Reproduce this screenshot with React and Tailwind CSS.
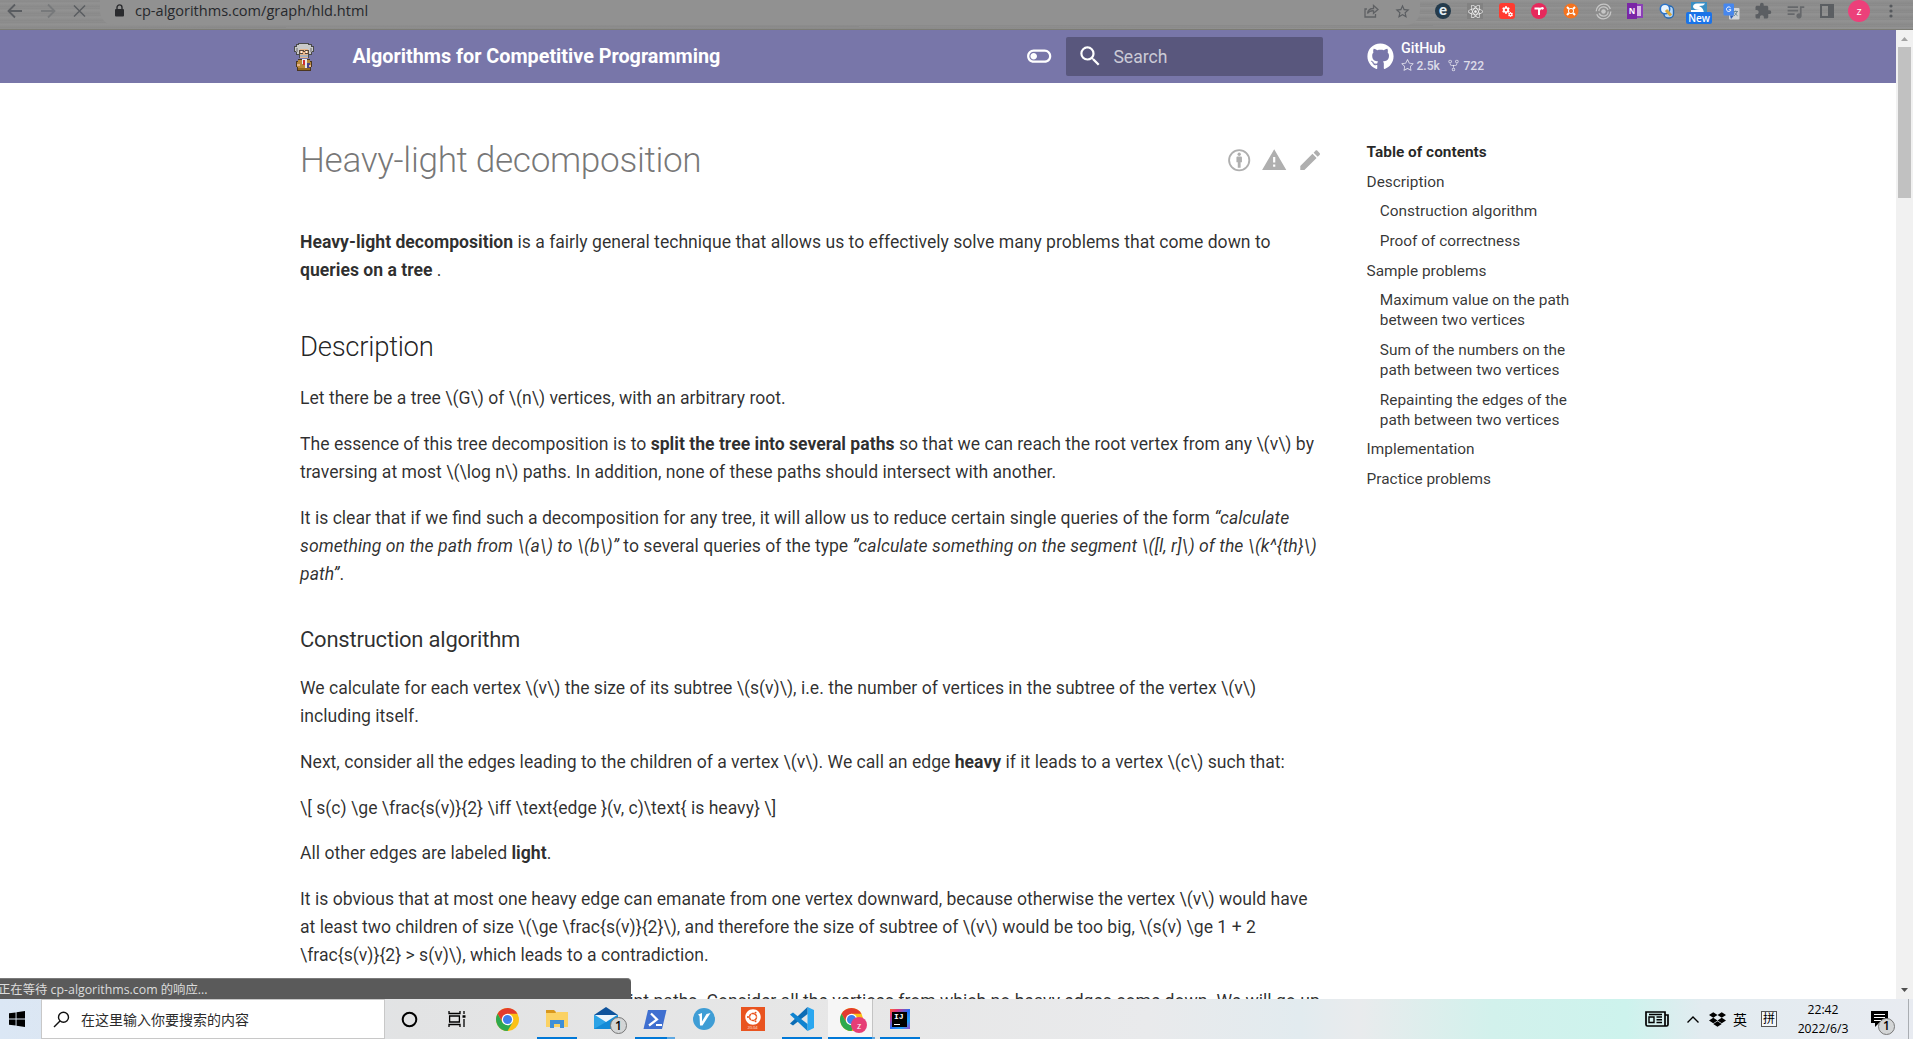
import React from "react";
import { FaGithub, FaReact, FaUbuntu, FaDropbox, FaCog } from "react-icons/fa";
import { GoStar, GoRepoForked } from "react-icons/go";
import { MdExtension, MdQueueMusic, MdStarBorder } from "react-icons/md";

const P = "mb-[17.6px] whitespace-nowrap";

/* ---------- browser toolbar ---------- */
function ExtensionIcons() {
  const icons = [
    <div className="flex h-4 w-4 items-center justify-center rounded-full bg-[#243b4c] font-['Lato',sans-serif] text-[15px] leading-none font-black text-[#e4edf2]"><span className="-mt-[3px]">e</span></div>,
    <div className="flex h-4 w-4 items-center justify-center bg-[#828282]"><FaReact size={15} color="#f2f2f2" /></div>,
    <div className="relative h-4 w-4 rounded-[3px] bg-[#ff3b30]"><FaCog className="absolute top-[3px] left-[3px]" size={8} color="#fff" /><FaCog className="absolute top-[9px] left-[9px]" size={5} color="#fff" /></div>,
    <svg width="16" height="16" viewBox="0 0 16 16"><circle cx="8" cy="8" r="8" fill="#e6295c" /><path d="M3.5 5.5h5M8 5V12M8 8.500q0-3 2-3" stroke="#fff" strokeWidth="2" fill="none" /><circle cx="11.300" cy="5.300" r="1.400" fill="#fff" /></svg>,
    <svg width="16" height="16" viewBox="0 0 16 16"><circle cx="8" cy="8" r="7.500" fill="#f4731f" /><path d="M4 4l2 2M12 4L10 6M4 12l2-2M12 12L10 10" stroke="#fff" strokeWidth="2" /><circle cx="8" cy="8" r="2.600" fill="none" stroke="#fff" strokeWidth="1" /></svg>,
    <svg width="17" height="17" viewBox="0 0 17 17" fill="none" stroke="#c6c6c6"><circle cx="8.500" cy="8.500" r="7.300" strokeWidth="1.300" strokeDasharray="20 3" /><circle cx="8.500" cy="8.500" r="4.700" strokeWidth="1.300" strokeDasharray="12.500 2.300" /><circle cx="8.500" cy="8.500" r="2.300" fill="#c6c6c6" stroke="none" /></svg>,
    <div className="relative h-4 w-4"><div className="absolute top-[1px] right-0 h-[14px] w-[8px] border-2 border-[#8a3fb5] bg-[#d9b8e8]" /><div className="absolute top-0 left-0 flex h-4 w-[10px] items-center justify-center bg-[#7b26a6] font-['Open_Sans',sans-serif] text-[8px] font-bold text-white">N</div></div>,
    <svg width="16" height="16" viewBox="0 0 16 16"><rect x="5" y="3" width="9.500" height="12" rx="4" fill="#b9d8f8" stroke="#2567b0" strokeWidth="1.400" /><circle cx="6" cy="6" r="4.700" fill="#e8f4ff" stroke="#2d74c8" strokeWidth="1.600" /><path d="M7 7l5 5.500" stroke="#d9a83c" strokeWidth="3" /></svg>,
    <div className="relative h-[18px] w-[26px]"><svg className="absolute top-0 left-[5px]" width="16" height="12" viewBox="0 0 16 12"><rect width="16" height="12" fill="#3a8fc4" /><path d="M0 12V8H9Q3 8 2 5Q2 1.500 6 1.500H14Q13 4 8 4Q13 6 13 12Z" fill="#fff" /></svg><div className="absolute top-[10px] left-0 h-[12px] w-[26px] rounded-[2px] bg-[#1a73e8] text-center font-['Open_Sans',sans-serif] text-[10px] leading-[12px] font-semibold text-white">New</div></div>,
    <svg width="17" height="17" viewBox="0 0 17 17"><rect x="6" y="5" width="10.500" height="11.500" rx="1" fill="#d4d6d8" /><rect x="0.500" y="0.500" width="10.500" height="12" rx="1" fill="#4787ee" /><path d="M8 16l-1-3.500h4z" fill="#2f5fb8" /><path d="M7.600 4.800A2.300 2.300 0 1 0 8 6.800H5.800" fill="none" stroke="#fff" strokeWidth="1" /><path d="M10.500 8.500h4.500M12.700 7.500v1M14 8.800q-1 3-3 4M11.500 9.500q1 2 3 3.200" fill="none" stroke="#6c8a9c" strokeWidth="1" /></svg>,
    <MdExtension size={18} color="#5b5e62" />,
    <MdQueueMusic size={21} color="#66686b" />,
    <svg width="14" height="14" viewBox="0 0 14 14"><rect x="1" y="1" width="12" height="12" fill="none" stroke="#5b5e62" strokeWidth="2" /><rect x="8" y="1" width="5" height="12" fill="#5b5e62" /></svg>,
    <div className="flex h-[22px] w-[22px] items-center justify-center rounded-full bg-[#ec407a] font-['Open_Sans',sans-serif] text-[11px] text-white">z</div>,
    <svg width="4" height="14" viewBox="0 0 4 14" fill="#56595d"><circle cx="2" cy="2" r="1.600" /><circle cx="2" cy="7" r="1.600" /><circle cx="2" cy="12" r="1.600" /></svg>,
  ];
  return (
    <div className="ml-[7px] flex h-[22px] items-center">
      {icons.map((icon, i) => (
        <div key={i} className="flex w-8 justify-center">{icon}</div>
      ))}
    </div>
  );
}

function BrowserBar() {
  return (
    <div className="h-[30px] shrink-0 overflow-hidden border-b border-[#7c7c74] bg-[#8e8e8e] bg-[repeating-linear-gradient(179.900deg,#8e8e8e_0px,#8a8a8a_2px,#939393_3px,#8e8e8e_5px,#898989_7px)]">
      <div className="flex h-[25px] items-start">
        <svg className="mt-[3px] ml-[7px]" width="16" height="16" viewBox="0 0 16 16" fill="none" stroke="#5a5d61" strokeWidth="1.800"><path d="M15 8H2M8 1.500L1.500 8L8 14.500" /></svg>
        <svg className="mt-[3px] ml-[17px]" width="16" height="16" viewBox="0 0 16 16" fill="none" stroke="#77797b" strokeWidth="1.800"><path d="M1 8H14M8 1.500L14.500 8L8 14.500" /></svg>
        <svg className="mt-[4px] ml-[17px]" width="13" height="14" viewBox="0 0 13 14" fill="none" stroke="#5a5d61" strokeWidth="1.500"><path d="M1 1.500L12 12.500M12 1.500L1 12.500" /></svg>
        <div className="ml-[14px] flex h-[25px] w-[1320px] items-start rounded-b-[14px] bg-[#919191]">
          <svg className="mt-[4px] ml-[15px]" width="9" height="13" viewBox="0 0 9 13"><rect x="0" y="5" width="9" height="7.600" rx="1" fill="#2a2b2e" /><path d="M2 5V3.400a2.500 2.500 0 0 1 5 0V5" fill="none" stroke="#2a2b2e" strokeWidth="1.400" /></svg>
          <span className="ml-[11px] font-['Open_Sans','Noto_Sans',sans-serif] text-[14.550px] leading-[21px] text-[#26282c]">cp-algorithms.com/graph/hld.html</span>
          <svg className="mt-[4px] mr-[15px] ml-auto" width="15" height="14" viewBox="0 0 15 14" fill="none" stroke="#5f6164" strokeWidth="1.300"><path d="M3 5H1v8h10.500v-3M3.500 9.500Q4 4.500 9.500 4.500V1.500L14 5.500L9.500 9.300V6.800Q5.500 6.500 3.500 9.500Z" /></svg>
          <MdStarBorder className="mt-[3px] mr-[9px]" size={17} color="#5a5d61" />
        </div>
        <ExtensionIcons />
      </div>
    </div>
  );
}

/* ---------- site header ---------- */
function Professor() {
  return (
    <svg width="22" height="28" viewBox="0 0 22 28" shapeRendering="crispEdges">
      <path d="M5 0h11v1h3v2h2v6h-2v3h-3v3H6v-3H3V9H1V3h2V1h2z" fill="#4a4a4a" />
      <path d="M6 1h9v1h3v2h2v4h-2v3H4V8H2V4h2V2h2z" fill="#c9c9c9" />
      <path d="M3 5h2v4H3zM17 5h2v4h-2z" fill="#9a9a9a" />
      <path d="M7 6h8v9H7z" fill="#e8b58a" />
      <path d="M6 7h5v1H6zM12 7h4v1h-4zM6 10h4v1H6zM12 10h4v1h-4zM6 8h1v2H6zM10 8h2v1h-2zM15 8h1v2h-1z" fill="#5b4a3c" />
      <path d="M8 8h1v2H8zM13 8h1v2h-1z" fill="#fff1e0" />
      <path d="M7 12h8v2H7z" fill="#a9b3bf" />
      <path d="M5 16h12v2h2v6h-1v4H4v-4H3v-6h2z" fill="#4b3620" />
      <path d="M5 17h12v2h1v5h-1v3H5v-3H4v-5h1z" fill="#b8893b" />
      <path d="M9 16h5v5H9z" fill="#ececec" />
      <path d="M10 17h2v5h-2z" fill="#cf2f33" />
      <path d="M12 19h2v6h-2z" fill="#e6e8f2" />
      <path d="M14 20h3v5h-3z" fill="#4a4387" />
      <path d="M4 21h3v2H4zM16 22h2v2h-2z" fill="#e8b58a" />
      <path d="M5 25h12v2H5z" fill="#94691f" />
    </svg>
  );
}

function SiteHeader() {
  return (
    <header className="flex h-[53px] shrink-0 items-center bg-[#7876a9] pl-[293px] text-white">
      <Professor />
      <span className="ml-[37.500px] text-[19.800px] font-bold">Algorithms for Competitive Programming</span>
      <div className="flex-1" />
      <svg width="26.400" height="26.400" viewBox="0 0 24 24" fill="#fff"><path d="M17 6H7c-3.310 0-6 2.690-6 6s2.690 6 6 6h10c3.310 0 6-2.690 6-6s-2.690-6-6-6zm0 10H7c-2.210 0-4-1.790-4-4s1.790-4 4-4h10c2.210 0 4 1.790 4 4s-1.790 4-4 4zM7 9c-1.660 0-3 1.340-3 3s1.340 3 3 3 3-1.340 3-3-1.340-3-3-3z" /></svg>
      <div className="ml-[13.600px] flex h-[39px] w-[257px] items-center rounded-[2px] bg-[#59577d]">
        <svg className="ml-[11px]" width="26.400" height="26.400" viewBox="0 0 24 24" fill="#fff"><path d="M9.500 3A6.500 6.500 0 0 1 16 9.500c0 1.610-.590 3.090-1.560 4.230l.270.270h.790l5 5-1.500 1.500-5-5v-.790l-.270-.270A6.516 6.516 0 0 1 9.500 16 6.500 6.500 0 0 1 3 9.500 6.500 6.500 0 0 1 9.500 3m0 2C7 5 5 7 5 9.500S7 14 9.500 14 14 12 14 9.500 12 5 9.500 5Z" /></svg>
        <span className="mt-[2px] ml-[10px] text-[17.600px] text-white/70">Search</span>
      </div>
      <div className="ml-[43.500px] flex w-[529.500px] items-center">
        <FaGithub size={27} />
        <div className="ml-[7.500px] text-[14.300px]">
          <div className="leading-[18px] font-medium">GitHub</div>
          <div className="flex items-center text-[12.100px] leading-[18px] font-medium text-white/75">
            <GoStar size={13} /><span className="ml-[2.500px]">2.5k</span>
            <GoRepoForked className="ml-[7.500px]" size={13} /><span className="ml-[3px]">722</span>
          </div>
        </div>
      </div>
    </header>
  );
}

/* ---------- article ---------- */
function Article() {
  return (
    <article className="ml-[300px] w-[1023px] shrink-0 pt-[54.500px] text-[17.600px] leading-[28.160px] text-black/82">
      <div className="mb-[44.300px] flex items-center">
        <h1 className="flex-1 text-[35.200px] leading-[45.760px] font-light tracking-[-0.010em] text-black/54">Heavy-light decomposition</h1>
        <div className="flex gap-[8.800px] text-[#afafaf]">
          <svg width="26.400" height="26.400" viewBox="0 0 24 24" fill="currentColor"><circle cx="12" cy="12" r="9.200" fill="none" stroke="currentColor" strokeWidth="1.700" /><circle cx="12" cy="6.600" r="1.500" /><path d="M9.500 9.600q0-.9.900-.9h3.200q.9 0 .9.900v4.200h-1.200v5h-2.600v-5H9.500z" /></svg>
          <svg width="26.400" height="26.400" viewBox="0 0 24 24" fill="currentColor" fillRule="evenodd"><path d="M1 21h22L12 2 1 21ZM11 9h2v5h-2zM11 16h2v2h-2z" /></svg>
          <svg width="26.400" height="26.400" viewBox="0 0 24 24" fill="currentColor"><path d="M20.710 7.040c.390-.390.390-1.040 0-1.410l-2.340-2.340c-.370-.390-1.020-.390-1.410 0l-1.840 1.830 3.750 3.750M3 17.250V21h3.750L17.810 9.930l-3.750-3.750L3 17.250Z" /></svg>
        </div>
      </div>
      <p className={P}><b>Heavy-light decomposition</b> is a fairly general technique that allows us to effectively solve many problems that come down to<br /><b>queries on a tree</b> .</p>
      <h2 className="mt-[44px] mb-[17.600px] text-[27.500px] leading-[38.500px] font-light tracking-[-0.010em] text-black/87">Description</h2>
      <p className={P}>{"Let there be a tree \\(G\\) of \\(n\\) vertices, with an arbitrary root."}</p>
      <p className={P}>The essence of this tree decomposition is to <b>split the tree into several paths</b>{" so that we can reach the root vertex from any \\(v\\) by"}<br />{"traversing at most \\(\\log n\\) paths. In addition, none of these paths should intersect with another."}</p>
      <p className={P}>It is clear that if we find such a decomposition for any tree, it will allow us to reduce certain single queries of the form <em className="tracking-[0.070px]">“calculate<br />{"something on the path from \\(a\\) to \\(b\\)”"}</em> to several queries of the type <em className="tracking-[0.070px]">{"”calculate something on the segment \\([l, r]\\) of the \\(k^{th}\\)"}<br />path”</em>.</p>
      <h3 className="mt-[35.200px] mb-[17.600px] text-[22px] leading-[33px] tracking-[-0.010em]">Construction algorithm</h3>
      <p className={P}>{"We calculate for each vertex \\(v\\) the size of its subtree \\(s(v)\\), i.e. the number of vertices in the subtree of the vertex \\(v\\)"}<br />including itself.</p>
      <p className={P}>{"Next, consider all the edges leading to the children of a vertex \\(v\\). We call an edge "}<b>heavy</b>{" if it leads to a vertex \\(c\\) such that:"}</p>
      <p className={P}>{"\\[ s(c) \\ge \\frac{s(v)}{2} \\iff \\text{edge }(v, c)\\text{ is heavy} \\]"}</p>
      <p className={P}>All other edges are labeled <b>light</b>.</p>
      <p className={P}>{"It is obvious that at most one heavy edge can emanate from one vertex downward, because otherwise the vertex \\(v\\) would have"}<br />{"at least two children of size \\(\\ge \\frac{s(v)}{2}\\), and therefore the size of subtree of \\(v\\) would be too big, \\(s(v) \\ge 1 + 2"}<br />{"\\frac{s(v)}{2} > s(v)\\), which leads to a contradiction."}</p>
      <p className={P}>Now we will decompose the tree into disjoint paths. Consider all the vertices from which no heavy edges come down. We will go up</p>
    </article>
  );
}

const toc = [
  ["Description", false],
  ["Construction algorithm", true],
  ["Proof of correctness", true],
  ["Sample problems", false],
  ["Maximum value on the path\nbetween two vertices", true],
  ["Sum of the numbers on the\npath between two vertices", true],
  ["Repainting the edges of the\npath between two vertices", true],
  ["Implementation", false],
  ["Practice problems", false],
];

function TableOfContents() {
  return (
    <nav className="ml-[43.600px] pt-[59px] text-[15.400px] leading-[20.020px] text-black/80">
      <div className="font-bold text-black/85">Table of contents</div>
      {toc.map(([label, nested]) => (
        <div key={label} className={nested ? "mt-[9.625px] ml-[13.200px] whitespace-pre" : "mt-[9.625px] whitespace-pre"}>{label}</div>
      ))}
    </nav>
  );
}

function Scrollbar() {
  return (
    <div className="flex w-[17px] shrink-0 flex-col items-center bg-[#f1f1f1]">
      <svg width="17" height="17" viewBox="0 0 17 17"><path d="M5 11l3.500-4L12 11z" fill="#a3a3a3" /></svg>
      <div className="h-[151px] w-[13px] bg-[#c1c1c1]" />
      <div className="flex-1" />
      <svg width="17" height="17" viewBox="0 0 17 17"><path d="M5 6l3.500 4L12 6z" fill="#505050" /></svg>
    </div>
  );
}

/* ---------- taskbar ---------- */
function Chrome({ size = 23 }) {
  return (
    <svg width={size} height={size} viewBox="0 0 24 24">
      <circle cx="12" cy="12" r="12" fill="#fbc116" />
      <path d="M12 6h10.390A12 12 0 0 0 1.610 6L6.800 15z" fill="#e33b2e" />
      <path d="M1.610 6A12 12 0 0 0 12 24l5.200-9H6.800z" fill="#2da94f" />
      <circle cx="12" cy="12" r="6" fill="#fff" />
      <circle cx="12" cy="12" r="4.700" fill="#3f7fec" />
    </svg>
  );
}

const Badge = ({ className }) => (
  <span className={"absolute flex h-[17px] w-[17px] items-center justify-center rounded-full border border-[#777] bg-[#d3d5d6] font-['Open_Sans',sans-serif] text-[12px] leading-none font-semibold text-black " + className}>1</span>
);

function TaskButton({ children, active, tail, bar = "w-[40px]" }) {
  return (
    <div className="relative flex h-[40px] w-[49px] shrink-0 items-center justify-center">
      {children}
      {active && <div className={"absolute bottom-0 left-[5px] h-[2px] bg-[#0078d7] " + bar} />}
      {tail && <div className="absolute right-[4px] bottom-0 h-[2px] w-[8px] bg-[#5ea8e2]" />}
    </div>
  );
}

function Taskbar() {
  return (
    <div className="flex h-[40px] shrink-0 bg-[linear-gradient(90deg,#dbe7f5_0%,#e2e3e4_21%,#e7e7e7_45%,#e9eaec_60%,#e2ebef_68%,#e9ebed_71%,#d2f1ec_78%,#cdf3ed_85%,#e2ebf0_89%,#e8ebf1_100%)] font-['Open_Sans','Noto_Sans_CJK_SC',sans-serif] text-black">
      <div className="flex w-[41px] items-center pl-[9px]">
        <svg width="16" height="16" viewBox="0 0 16 16"><path d="M0 2.300L6.600 1.400V7.600H0zM7.500 1.200L16 0V7.600H7.500zM0 8.400H6.600V14.600L0 13.700zM7.500 8.400H16V16L7.500 14.800z" /></svg>
      </div>
      <div className="flex w-[344px] items-center border border-[#c8c8c8] bg-white">
        <svg className="ml-[11px]" width="17" height="17" viewBox="0 0 17 17" fill="none" stroke="#111" strokeWidth="1.400"><circle cx="10.500" cy="6.300" r="5" /><path d="M7 10L1 16" /></svg>
        <span className="ml-[11px] text-[14px] text-[#2b2b2b]">在这里输入你要搜索的内容</span>
      </div>
      <TaskButton><svg width="17" height="17" viewBox="0 0 17 17"><circle cx="8.500" cy="8.500" r="6.800" fill="none" stroke="#000" strokeWidth="2" /></svg></TaskButton>
      <TaskButton><svg className="-ml-[3px]" width="18" height="16" viewBox="0 0 18 16" fill="none" stroke="#000" strokeWidth="1.300"><path d="M1 0v2.500h11V0M1 16v-2.500h11V16M1.600 5h9.800v6H1.600zM16 0v3M16 8v8" /><path d="M14.500 5.500h3" strokeWidth="2.500" /></svg></TaskButton>
      <TaskButton><Chrome /></TaskButton>
      <TaskButton active>
        <svg width="22" height="20" viewBox="0 0 22 20"><path d="M0 1h8l2 2v4H0z" fill="#d9981e" /><path d="M0 4h9l2-1h11v15H0z" fill="#fbd264" /><path d="M4 19v-8h14v8h-4v-4H8v4z" fill="#3e8fd8" /></svg>
      </TaskButton>
      <TaskButton>
        <svg className="-mt-[3px]" width="24" height="22" viewBox="0 0 24 22"><path d="M0 8L12 0l12 8v3H0z" fill="#0f539c" /><path d="M0 8v14h24V8z" fill="#2ca3e6" /><path d="M0 22L24 8v14z" fill="#138bd7" /><path d="M1 8h22l-11 7z" fill="#eef5fb" /></svg>
        <Badge className="top-[18px] left-[29px]" />
      </TaskButton>
      <TaskButton active tail bar="w-[32px]">
        <svg width="24" height="19" viewBox="0 0 24 19"><path d="M5 0h18.500L19 19H.500z" fill="#3f6fd0" /><path d="M8 3.500l6 6-8 6M13 15h6" fill="none" stroke="#fff" strokeWidth="2.200" /></svg>
      </TaskButton>
      <TaskButton><svg width="22" height="22" viewBox="0 0 22 22"><circle cx="11" cy="11" r="11" fill="#3f9dd5" /><path d="M5 6.500L9 5v8.500L13.500 6l4-1L9.500 17.500H7L6.500 8z" fill="#fff" /></svg></TaskButton>
      <TaskButton>
        <div className="flex h-6 w-6 flex-col items-center bg-[#e95420] pt-[2px]"><FaUbuntu size={16} color="#fff" /><span className="mt-[1px] text-[4px] leading-[4px] text-white/80">20.04</span></div>
      </TaskButton>
      <TaskButton active>
        <svg width="24" height="24" viewBox="0 0 24 24"><path d="M17.500 0L24 3v18l-6.500 3z" fill="#2aa7f0" /><path d="M17.500 0v7L3 18.500 0 16.500z" fill="#0b6cb5" /><path d="M17.500 24v-7L3 5.500 0 7.500z" fill="#0f83d0" /></svg>
      </TaskButton>
      <div className="relative flex h-[40px] w-[49px] shrink-0 items-center justify-center">
        <div className="flex h-[40px] w-[45px] items-center justify-center border-r border-[#c4c4c4] bg-[#f6f6f6] pl-[3px]"><Chrome /></div>
        <span className="absolute top-[18px] left-[25px] flex h-4 w-4 items-center justify-center rounded-full bg-[#e63e76] text-[9px] leading-none text-white">z</span>
        <div className="absolute bottom-0 left-[2px] h-[2px] w-[45px] bg-[#0078d7]" />
        <div className="absolute right-0 bottom-0 h-[2px] w-[3px] bg-[#5ea8e2]" />
      </div>
      <TaskButton active>
        <div className="flex h-5 w-5 items-center justify-center bg-[linear-gradient(135deg,#fc6b2d_0%,#e0357c_20%,#2a6df5_50%,#1ea0f5_75%,#a04ad0_100%)]"><div className="relative h-[15px] w-[15px] bg-black pl-[2px] font-['Liberation_Mono',monospace] text-[8px] leading-[9px] font-bold text-white">IJ<div className="absolute bottom-[2px] left-[2px] h-px w-[6px] bg-white" /></div></div>
      </TaskButton>
      <div className="flex-1" />
      <div className="flex w-[263px] items-center">
        <svg width="24" height="16" viewBox="0 0 24 16" fill="none" stroke="#000" strokeWidth="1.700"><path d="M20 15H2.500Q1 15 1 13.500V1h19zM20 4h3v9.500Q23 15 21.500 15H19" /><path d="M4 6h5v5.500H4zM4 3.500h13M11.500 6H17M11.500 8.800H17M11.500 11.500H17" strokeWidth="1.400" /></svg>
        <svg className="ml-[18px]" width="12" height="7" viewBox="0 0 12 7" fill="none" stroke="#000" strokeWidth="1.400"><path d="M.5 6.500L6 1l5.500 5.500" /></svg>
        <FaDropbox className="ml-[10px]" size={17} />
        <span className="ml-[7px] text-[14px]">英</span>
        <span className="ml-[14px] flex h-4 w-4 items-center justify-center border border-[#555] bg-white/60 text-[12px] leading-none">拼</span>
        <div className="ml-[18.500px] w-[55px] text-center text-[12.200px] leading-[19px]">22:42<br />2022/6/3</div>
        <div className="relative ml-[20.500px] h-[17px] w-[18px]">
          <svg width="17" height="16" viewBox="0 0 17 16"><path d="M0 0h17v12h-9l-4 4v-4H0z" /><path d="M3 3.500h11M3 6.500h11M3 9.500h7" stroke="#fff" strokeWidth="1.100" /></svg>
          <Badge className="top-[7px] left-[7px]" />
        </div>
      </div>
      <div className="w-[5px] border-l border-[#a9adb2]" />
    </div>
  );
}

export default function App() {
  return (
    <div className="flex h-[1039px] w-[1913px] flex-col overflow-hidden bg-white font-['Roboto',sans-serif]">
      <BrowserBar />
      <div className="relative flex h-[969px] shrink-0">
        <div className="flex h-full flex-1 flex-col overflow-hidden">
          <SiteHeader />
          <div className="flex">
            <Article />
            <TableOfContents />
          </div>
        </div>
        <Scrollbar />
        <div className="absolute bottom-0 left-0 h-[21px] w-[631px] overflow-hidden rounded-tr-[4px] border-t border-[#7a7a7a] bg-[#5a5a5a] font-['Open_Sans','Noto_Sans_CJK_SC',sans-serif] text-[12.350px] leading-[21px] whitespace-nowrap text-[#dcdcdc]"><span className="-ml-[2px]">正在等待 cp-algorithms.com 的响应...</span></div>
      </div>
      <Taskbar />
    </div>
  );
}
